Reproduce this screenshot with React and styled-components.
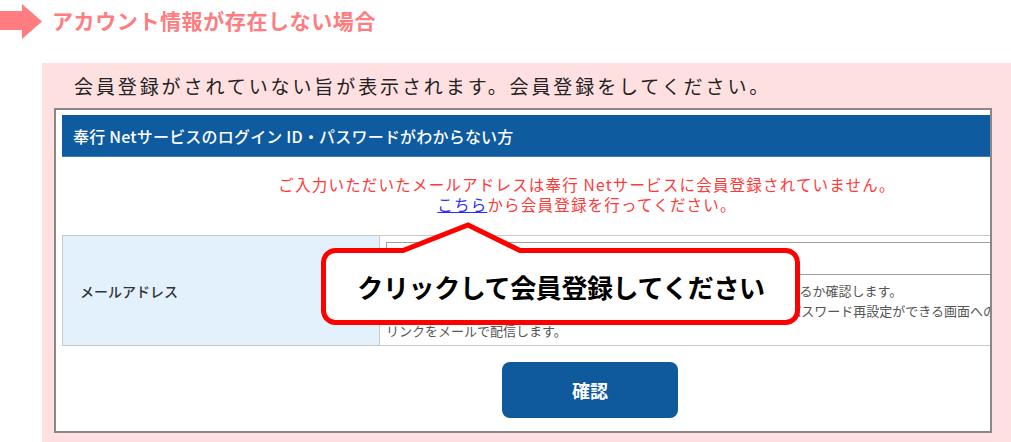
import React from "react";
import styled, { createGlobalStyle } from "styled-components";

const GlobalStyle = createGlobalStyle`
  html, body { margin: 0; padding: 0; background: #ffffff; }
  body {
    font-family: "Noto Sans CJK JP", "Noto Sans", sans-serif;
    overflow: hidden;
  }
  * { box-sizing: border-box; }
`;

const Page = styled.div`
  width: 1011px;
  height: 442px;
  overflow: hidden;
`;

const TitleRow = styled.div`
  display: flex;
  align-items: center;
  gap: 10px;
  height: 40px;
  padding-top: 1px;
`;

const Title = styled.h2`
  margin: 0;
  font-size: 21px;
  line-height: 1;
  font-weight: 700;
  letter-spacing: 0.6px;
  color: #ff7c80;
`;

const Panel = styled.section`
  margin: 23px 0 0 42px;
  height: 379px;
  background: #fee0e1;
  padding: 8px 0 0 12px;
`;

const Lead = styled.p`
  margin: 0;
  padding-left: 20px;
  font-size: 19px;
  line-height: 30px;
  letter-spacing: 2.9px;
  color: #222;
  font-weight: 400;
  white-space: nowrap;
`;

const Shot = styled.div`
  position: relative;
  margin-top: 7px;
  width: 938px;
  height: 325px;
  border: 2px solid #888888;
  background: #ffffff;
  overflow: hidden;
  padding: 5px 0 0 6px;
`;

const Inner = styled.div`
  width: 1050px;
`;

const Header = styled.div`
  height: 42px;
  display: flex;
  align-items: center;
  padding-left: 11px;
  background: #0f5b9f;
  border-bottom: 1px solid #3d7cbc;
  color: #ffffff;
  font-size: 16px;
  font-weight: 500;
  letter-spacing: 0.2px;
  white-space: nowrap;
`;

const Message = styled.p`
  margin: 18px 0 0;
  text-align: center;
  font-size: 15.5px;
  line-height: 19.5px;
  letter-spacing: 1.2px;
  color: #ff3838;
  white-space: nowrap;
`;

const Link = styled.a`
  color: #2b2bff;
  text-decoration: underline;
`;

const FormTable = styled.div`
  margin-top: 21px;
  display: grid;
  grid-template-columns: 316px 1fr;
  border-top: 1px solid #c8c8c8;
  border-bottom: 1px solid #c8c8c8;
  border-left: 1px solid #c8c8c8;
`;

const LabelCell = styled.div`
  background: #e3f1fd;
  display: flex;
  align-items: center;
  padding-left: 17px;
  font-size: 14px;
  font-weight: 500;
  color: #333;
`;

const ValueCell = styled.div`
  border-left: 1px solid #c8c8c8;
  padding: 6px 0 4px 6px;
`;

const Input = styled.div`
  height: 33px;
  border: 1px solid #a0a0a0;
  background: #fff;
`;

const Note = styled.p`
  margin: 6px 0 0;
  font-size: 13px;
  line-height: 20px;
  color: #555;
  white-space: nowrap;
`;

const ButtonRow = styled.div`
  display: flex;
  justify-content: center;
  margin-top: 16px;
  padding-left: 6px;
`;

const Button = styled.button`
  width: 176px;
  height: 56px;
  border: none;
  border-radius: 8px;
  background: #0f5a9c;
  color: #ffffff;
  font-family: inherit;
  font-size: 18px;
  font-weight: 700;
`;

const Callout = styled.div`
  position: absolute;
  left: 262px;
  top: 108px;
  width: 486px;
  height: 110px;
  display: flex;
  align-items: center;
  justify-content: center;
  padding-top: 27px;
`;

const CalloutShape = styled.svg`
  position: absolute;
  left: 0;
  top: 0;
`;

const CalloutText = styled.span`
  position: relative;
  font-size: 26px;
  font-weight: 700;
  letter-spacing: -0.4px;
  color: #000;
  white-space: nowrap;
`;

const Arrow = () => (
  <svg width="42" height="38" viewBox="0 0 42 38">
    <path d="M0 9 H22 V2 L42 19.5 L22 37 V28 H0 Z" fill="#ff7c80" />
  </svg>
);

export default function App() {
  return (
    <Page>
      <GlobalStyle />
      <TitleRow>
        <Arrow />
        <Title>アカウント情報が存在しない場合</Title>
      </TitleRow>
      <Panel>
        <Lead>会員登録がされていない旨が表示されます。会員登録をしてください。</Lead>
        <Shot>
          <Inner>
            <Header>奉行 Netサービスのログイン ID・パスワードがわからない方</Header>
            <Message>
              ご入力いただいたメールアドレスは奉行 Netサービスに会員登録されていません。
              <br />
              <Link>こちら</Link>から会員登録を行ってください。
            </Message>
            <FormTable>
              <LabelCell>メールアドレス</LabelCell>
              <ValueCell>
                <Input />
                <Note>
                  入力したメールアドレスが奉行 Netサービスに会員として登録されているか確認します。
                  <br />
                  登録されている場合には、ご入力いただいたメールアドレス宛てに、パスワード再設定ができる画面への
                  <br />
                  リンクをメールで配信します。
                </Note>
              </ValueCell>
            </FormTable>
            <ButtonRow>
              <Button>確認</Button>
            </ButtonRow>
          </Inner>
          <Callout>
            <CalloutShape width="486" height="110" viewBox="0 0 486 110">
              <path
                d="M17.5 32.5 H85 L150 7 L202 32.5 H467.5 A12 12 0 0 1 479.5 44.5 V92.5 A12 12 0 0 1 467.5 104.5 H17.5 A12 12 0 0 1 5.5 92.5 V44.5 A12 12 0 0 1 17.5 32.5 Z"
                fill="#ffffff"
                stroke="#ff0000"
                strokeWidth="5"
                strokeLinejoin="miter"
              />
            </CalloutShape>
            <CalloutText>クリックして会員登録してください</CalloutText>
          </Callout>
        </Shot>
      </Panel>
    </Page>
  );
}
